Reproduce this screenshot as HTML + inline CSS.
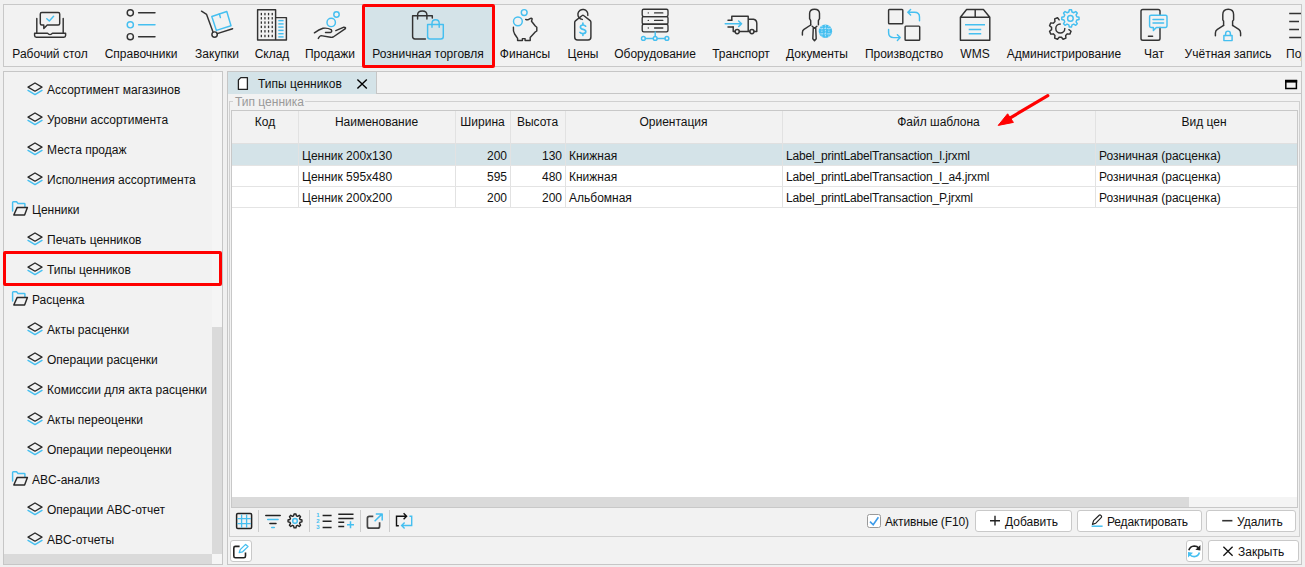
<!DOCTYPE html>
<html><head><meta charset="utf-8">
<style>
*{box-sizing:border-box;margin:0;padding:0}
html,body{width:1305px;height:567px;overflow:hidden;background:#f0f0f0;font-family:"Liberation Sans",sans-serif;font-size:12px;color:#111}
.a{position:absolute}
.t{position:absolute;white-space:nowrap;line-height:14px}
.box{position:absolute;border:1px solid #c6c6c6}
svg{position:absolute;overflow:visible}
.k{fill:none;stroke:#333;stroke-width:1.45;stroke-linecap:round;stroke-linejoin:round}
.b{fill:none;stroke:#45bff0;stroke-width:1.45;stroke-linecap:round;stroke-linejoin:round}
.lbl{position:absolute;top:47px;white-space:nowrap;line-height:14px;transform:translateX(-50%)}
.tr{position:absolute;left:0;width:100%;height:21px;border-bottom:1px solid #e4e4e4}
.c{position:absolute;top:0;height:21px;line-height:21px;white-space:nowrap;padding:0 4px}
.btn{position:absolute;background:#fff;border:1px solid #c9c9c9;border-radius:3px}
</style></head><body>

<!-- TOOLBAR -->
<div class="box" style="left:3px;top:4px;width:1299px;height:63px;background:#f2f2f2;border-color:#c8c8c8"></div>
<div class="a" style="left:362px;top:4px;width:133px;height:64px;border:3px solid #f00;border-radius:2px;background:#d4e3e8"></div>

<div class="lbl" style="left:50px">Рабочий стол</div>
<div class="lbl" style="left:141px">Справочники</div>
<div class="lbl" style="left:217px">Закупки</div>
<div class="lbl" style="left:272px">Склад</div>
<div class="lbl" style="left:330px">Продажи</div>
<div class="lbl" style="left:428px">Розничная торговля</div>
<div class="lbl" style="left:525px">Финансы</div>
<div class="lbl" style="left:583px">Цены</div>
<div class="lbl" style="left:655px">Оборудование</div>
<div class="lbl" style="left:741px">Транспорт</div>
<div class="lbl" style="left:817px">Документы</div>
<div class="lbl" style="left:904px">Производство</div>
<div class="lbl" style="left:975px">WMS</div>
<div class="lbl" style="left:1064px">Администрирование</div>
<div class="lbl" style="left:1154px">Чат</div>
<div class="lbl" style="left:1228px">Учётная запись</div>
<div class="a" style="left:1286px;top:47px;width:15px;overflow:hidden;white-space:nowrap;line-height:14px">Подсистемы</div>
<!--ICONS-->
<svg style="left:0;top:0" width="1305" height="70" viewBox="0 0 1305 70">
<g class="k"><path d="M36.8,18.5V32.8M63.2,18.5V32.8"/><path d="M34.6,33.2H47.5Q48.5,34.6 50,34.6Q51.5,34.6 52.5,33.2H65.6V35.6Q65.6,37.3 63.9,37.3H36.3Q34.6,37.3 34.6,35.6Z"/><path d="M41.8,12.4H58.2Q59.7,12.4 59.7,13.9V23.4Q59.7,24.9 58.2,24.9H47.2L43.8,28.4V24.9H41.8Q40.3,24.9 40.3,23.4V13.9Q40.3,12.4 41.8,12.4Z"/></g>
<path class="b" d="M46.8,18.8L49.3,21L53.6,16.3"/>
<g class="k"><circle cx="130.3" cy="12.8" r="3.1"/><circle cx="130.3" cy="36.7" r="3.1"/><path d="M138.6,12.8H155M138.6,36.7H155"/></g>
<g class="b"><circle cx="130.3" cy="24.8" r="3.1"/><path d="M138.6,24.8H155"/></g>
<g class="k"><path d="M201.5,11.2L206.6,14.4L212.9,31.8"/><circle cx="214.6" cy="34.6" r="2.7"/><path d="M217.2,33.6L232.6,28.8"/></g>
<g class="b"><path d="M211.8,16.5L226.8,11.5L231,25.8L216.4,30.4Z"/><path d="M219.4,14L220.4,17.6"/></g>
<g class="k"><path d="M257.6,40V9.8H275.6V40ZM275.6,17.6H286.4V40H275.6"/></g>
<rect x="260.7" y="12.9" width="1.3" height="2.4" fill="#333"/><rect x="260.7" y="17.1" width="1.3" height="2.4" fill="#333"/><rect x="260.7" y="21.4" width="1.3" height="2.4" fill="#333"/><rect x="260.7" y="25.7" width="1.3" height="2.4" fill="#333"/><rect x="260.7" y="30.1" width="1.3" height="2.4" fill="#333"/><rect x="260.7" y="34.8" width="1.3" height="2.4" fill="#333"/><rect x="264.3" y="12.9" width="1.3" height="2.4" fill="#333"/><rect x="264.3" y="17.1" width="1.3" height="2.4" fill="#333"/><rect x="264.3" y="21.4" width="1.3" height="2.4" fill="#333"/><rect x="264.3" y="25.7" width="1.3" height="2.4" fill="#333"/><rect x="264.3" y="30.1" width="1.3" height="2.4" fill="#333"/><rect x="264.3" y="34.8" width="1.3" height="2.4" fill="#333"/><rect x="267.9" y="12.9" width="1.3" height="2.4" fill="#333"/><rect x="267.9" y="17.1" width="1.3" height="2.4" fill="#333"/><rect x="267.9" y="21.4" width="1.3" height="2.4" fill="#333"/><rect x="267.9" y="25.7" width="1.3" height="2.4" fill="#333"/><rect x="267.9" y="30.1" width="1.3" height="2.4" fill="#333"/><rect x="267.9" y="34.8" width="1.3" height="2.4" fill="#333"/><rect x="271.6" y="12.9" width="1.3" height="2.4" fill="#333"/><rect x="271.6" y="17.1" width="1.3" height="2.4" fill="#333"/><rect x="271.6" y="21.4" width="1.3" height="2.4" fill="#333"/><rect x="271.6" y="25.7" width="1.3" height="2.4" fill="#333"/><rect x="271.6" y="30.1" width="1.3" height="2.4" fill="#333"/><rect x="271.6" y="34.8" width="1.3" height="2.4" fill="#333"/>
<g class="b" style="stroke-linecap:butt"><path d="M278.3,20.6H283.6"/><path d="M278.3,23.9H283.6"/><path d="M278.3,27.1H283.6"/><path d="M278.3,30.4H283.6"/><path d="M278.3,33.7H283.6"/><path d="M278.3,36.9H283.6"/></g>
<g class="b"><circle cx="336.5" cy="14.5" r="2.7"/><circle cx="331.2" cy="22.4" r="4.2"/></g>
<g class="k"><path d="M314.4,32.8Q319,29.5 323,28.3Q327,27.6 331.2,29.6Q332.5,31.8 330.6,32.4H325.5"/><path d="M335.8,30.6L343.9,27.2Q346,27.4 345.4,28.6L333.2,37Q331.5,37.6 330.6,37.3L321,35.6Q319.5,35.8 318.3,38.4"/></g>
<g class="k"><path d="M425.4,38.9H415Q412.6,38.9 412.6,36.5V15.8H432.3V17.9"/><path d="M417.6,19V15Q417.6,11 422.3,11Q426.9,11 426.9,15V19"/></g>
<g class="b"><path d="M427.6,24.5H443.3V36.4Q443.3,38.9 440.8,38.9H430.1Q427.6,38.9 427.6,36.4Z"/><path d="M432,27.2V23.3Q432,19.8 435.6,19.8Q439.2,19.8 439.2,23.3V27.2"/></g>
<g class="b"><circle cx="524.2" cy="12.5" r="2.9"/><circle cx="517.9" cy="21.3" r="4.4"/></g>
<path class="k" d="M513.4,27.2Q513,31 514.6,34Q516.4,36.6 517.6,38.4V40.4H522.4V38.6H525.1V40.4H530.2V37.6L535,32.2L536.8,31V27.2L535.3,26L531.5,21.2L532.2,18.8Q531.5,17.8 530.6,18.3L527.8,19.8Q526.5,19.9 525.7,19.4"/>
<g class="k"><path d="M587.8,15.4A5,5 0 1 0 582.3,19.4"/><path d="M582.2,15.5Q582.9,14.9 583.6,15.5L590.2,20.6Q590.9,21.2 590.9,22.2V37Q590.9,40 588,40H577.6Q574.7,40 574.7,37V22.4Q574.7,21.5 575.4,20.9Z"/></g>
<path class="b" style="stroke-width:1.7" d="M585.6,26.2Q584.8,25 583,25Q580.4,25 580.4,27.1Q580.4,28.8 583,29.4Q585.8,30 585.8,31.6Q585.8,33.6 583,33.6Q580.8,33.6 580,32.4M582.9,23.2V25M582.9,33.6V35.3"/>
<g class="k" style="stroke-width:1.35"><rect x="642.2" y="9.2" width="25.8" height="7.4" rx="1.5"/><rect x="642.2" y="16.6" width="25.8" height="7.6" rx="1.5"/><rect x="642.2" y="24.2" width="25.8" height="7.6" rx="1.5"/><path d="M654.6,12.9H662.8M654.6,20.4H662.8M654.6,28H662.8"/></g>
<g fill="#333"><circle cx="648.3" cy="12.9" r="0.7"/><circle cx="648.3" cy="20.4" r="0.7"/><circle cx="648.3" cy="28" r="0.7"/></g>
<g class="b"><path d="M645.4,38.4H653.2M657.2,38.4H665M655.2,32V36.4"/><circle cx="643.4" cy="38.4" r="1.9"/><circle cx="655.2" cy="38.4" r="1.9"/><circle cx="666.9" cy="38.4" r="1.9"/></g>
<g class="k"><path d="M731.8,20.3V16.3H748.2V31.4H739.4M735,31.4H733.2V27M748.2,19.2H753.5Q756.8,19.8 756.8,23.5V31.4H754.1M749.8,31.4H748.2"/><path d="M728,20.3H731.8M728,27H733.2"/><circle cx="737.2" cy="31.6" r="2.1"/><circle cx="751.9" cy="31.6" r="2.1"/></g>
<g class="b"><path d="M725.2,23.8H741.6M738.6,21L741.6,23.8L738.6,26.6"/></g>
<g class="k"><path d="M810.7,25V20.6L809.6,18.7V13.6Q809.6,9.2 814.5,9.2Q819.5,9.2 819.5,13.6V18.7L818.4,20.6V24.8"/><path d="M810.7,25L804,29.4Q802.4,30.6 802.4,32.4V34.9"/><path d="M812.2,26.2L814.5,28.2L816.9,26.2M813.3,27.8L812.8,38.8L814.5,40.8L816.2,38.8L815.7,27.8"/></g>
<circle cx="825.4" cy="31.2" r="6.7" fill="#45bff0"/>
<g fill="none" stroke="#c8ebfa" stroke-width="0.8" stroke-dasharray="1.6,0.9"><path d="M821.9,25.5V37M825.4,24.8V37.6M828.9,25.5V37M819.2,28.4H831.6M819.2,33.9H831.6"/></g>
<g class="k"><rect x="888.6" y="9.5" width="14.2" height="14.2" rx="0.8"/><rect x="905.1" y="26.1" width="14.6" height="14.1" rx="0.8"/></g>
<g class="b"><path d="M919.5,20.8V17Q919.5,12.2 914.5,12.2H908.2M910.6,9.4L907.8,12.2L910.6,15"/><path d="M888.6,29.4V32.5Q888.6,37.6 893.6,37.6H899.8M897.4,34.8L900.2,37.6L897.4,40.4"/></g>
<g class="k"><path d="M960.4,17.2L966.6,9.5H983.4L989.8,17.2V40.2H960.4ZM960.4,17.2H989.8M975.2,9.5V17.2"/></g>
<g class="b" style="stroke-linecap:butt"><path d="M965,24.8H985M968.7,29.4H981.2M968.7,33.8H981.2"/></g>
<defs><clipPath id="gclip"><path d="M1040,0H1090V40H1040Z M1070.4,18.4m-10.8,0a10.8,10.8 0 1 0 21.6,0a10.8,10.8 0 1 0 -21.6,0Z" clip-rule="evenodd"/></clipPath></defs>
<g class="k" clip-path="url(#gclip)"><path d="M1054.95,21.51 L1054.66,18.94 L1057.53,17.75 L1059.14,19.78 L1061.46,19.78 L1063.07,17.75 L1065.94,18.94 L1065.65,21.51 L1067.29,23.15 L1069.86,22.86 L1071.05,25.73 L1069.02,27.34 L1069.02,29.66 L1071.05,31.27 L1069.86,34.14 L1067.29,33.85 L1065.65,35.49 L1065.94,38.06 L1063.07,39.25 L1061.46,37.22 L1059.14,37.22 L1057.53,39.25 L1054.66,38.06 L1054.95,35.49 L1053.31,33.85 L1050.74,34.14 L1049.55,31.27 L1051.58,29.66 L1051.58,27.34 L1049.55,25.73 L1050.74,22.86 L1053.31,23.15Z"/><path d="M1060.3,24A4.5,4.5 0 1 0 1064.8,28.5"/></g>
<g class="b"><path d="M1068.80,12.00 L1069.32,9.77 L1071.48,9.77 L1072.00,12.00 L1073.80,12.74 L1075.74,11.53 L1077.27,13.06 L1076.06,15.00 L1076.80,16.80 L1079.03,17.32 L1079.03,19.48 L1076.80,20.00 L1076.06,21.80 L1077.27,23.74 L1075.74,25.27 L1073.80,24.06 L1072.00,24.80 L1071.48,27.03 L1069.32,27.03 L1068.80,24.80 L1067.00,24.06 L1065.06,25.27 L1063.53,23.74 L1064.74,21.80 L1064.00,20.00 L1061.77,19.48 L1061.77,17.32 L1064.00,16.80 L1064.74,15.00 L1063.53,13.06 L1065.06,11.53 L1067.00,12.74Z"/><circle cx="1070.4" cy="18.4" r="2.8"/></g>
<g class="k"><path d="M1160,27.5V38.4Q1160,40.2 1158.2,40.2H1142.8Q1141,40.2 1141,38.4V11.2Q1141,9.4 1142.8,9.4H1158.2Q1160,9.4 1160,11.2V15.2"/><path d="M1148.4,36.3H1152.6"/></g>
<g class="b"><path d="M1151,15.2H1165.6Q1167,15.2 1167,16.6V26Q1167,27.4 1165.6,27.4H1156.4L1153.4,30.6V27.4H1151Q1149.6,27.4 1149.6,26V16.6Q1149.6,15.2 1151,15.2Z"/><path d="M1153,19.5H1163.6M1153,23H1163.6"/></g>
<g class="k"><path d="M1223.6,25.4L1217.4,29.4Q1215.4,30.8 1215.4,33V35.8M1232.6,25.4L1238.8,29.4Q1240.6,30.8 1240.6,33V35.8"/><path d="M1223.6,25.4V21.2L1222.8,19.8V14.6Q1222.8,9.3 1228.2,9.3Q1233.6,9.3 1233.6,14.6V19.8L1232.6,21.2V25.4"/></g>
<g class="b"><rect x="1223.9" y="35.4" width="8.2" height="5.2"/><path d="M1225.6,35.4V33.8Q1225.6,31.1 1228,31.1Q1230.4,31.1 1230.4,33.8V35.4"/></g>
<g class="k" style="stroke-linecap:butt"><path d="M1289.2,13.4H1301M1289.2,21.4H1299M1289.2,29.5H1299M1289.2,37.5H1301"/></g>
</svg>
<!--/ICONS-->

<!-- LEFT PANEL -->
<div class="box" style="left:3px;top:71px;width:220px;height:494px;background:#f2f2f2"></div>
<div class="a" style="left:212px;top:72px;width:10px;height:492px;background:#f5f5f5"></div>
<div class="a" style="left:212px;top:327px;width:10px;height:227px;background:#dadada"></div>
<div class="a" style="left:4px;top:554px;width:208px;height:10px;background:#dadada"></div>
<div class="a" style="left:3px;top:251px;width:219px;height:35px;border:3px solid #f00;border-radius:2px"></div>
<!--TREE-->
<div class="t" style="left:47px;top:83px">Ассортимент магазинов</div>
<div class="t" style="left:47px;top:113px">Уровни ассортимента</div>
<div class="t" style="left:47px;top:143px">Места продаж</div>
<div class="t" style="left:47px;top:173px">Исполнения ассортимента</div>
<div class="t" style="left:32px;top:203px">Ценники</div>
<div class="t" style="left:47px;top:233px">Печать ценников</div>
<div class="t" style="left:47px;top:263px">Типы ценников</div>
<div class="t" style="left:32px;top:293px">Расценка</div>
<div class="t" style="left:47px;top:323px">Акты расценки</div>
<div class="t" style="left:47px;top:353px">Операции расценки</div>
<div class="t" style="left:47px;top:383px">Комиссии для акта расценки</div>
<div class="t" style="left:47px;top:413px">Акты переоценки</div>
<div class="t" style="left:47px;top:443px">Операции переоценки</div>
<div class="t" style="left:32px;top:473px">ABC-анализ</div>
<div class="t" style="left:47px;top:503px">Операции ABC-отчет</div>
<div class="t" style="left:47px;top:533px">ABC-отчеты</div>
<svg style="left:0;top:0" width="222" height="567" viewBox="0 0 222 567"><g transform="translate(0,0)"><path class="k" style="stroke:#2a2a2a;stroke-width:1.3" d="M28,87.1L35,83L42,87.1L35,91.2Z"/><path class="b" style="stroke-width:1.4" d="M28,90.4L35,94.6L42,90.4"/></g><g transform="translate(0,30)"><path class="k" style="stroke:#2a2a2a;stroke-width:1.3" d="M28,87.1L35,83L42,87.1L35,91.2Z"/><path class="b" style="stroke-width:1.4" d="M28,90.4L35,94.6L42,90.4"/></g><g transform="translate(0,60)"><path class="k" style="stroke:#2a2a2a;stroke-width:1.3" d="M28,87.1L35,83L42,87.1L35,91.2Z"/><path class="b" style="stroke-width:1.4" d="M28,90.4L35,94.6L42,90.4"/></g><g transform="translate(0,90)"><path class="k" style="stroke:#2a2a2a;stroke-width:1.3" d="M28,87.1L35,83L42,87.1L35,91.2Z"/><path class="b" style="stroke-width:1.4" d="M28,90.4L35,94.6L42,90.4"/></g><g transform="translate(0,0)"><path class="b" d="M12.6,211V202.6Q12.6,201.8 13.4,201.8H16.6L18,203.4H24.2Q24.9,203.4 24.9,204.1V206.4"/><path class="k" style="stroke:#2a2a2a" d="M17.2,207.4H27.4L24.6,215H13.8Z"/></g><g transform="translate(0,150)"><path class="k" style="stroke:#2a2a2a;stroke-width:1.3" d="M28,87.1L35,83L42,87.1L35,91.2Z"/><path class="b" style="stroke-width:1.4" d="M28,90.4L35,94.6L42,90.4"/></g><g transform="translate(0,180)"><path class="k" style="stroke:#2a2a2a;stroke-width:1.3" d="M28,87.1L35,83L42,87.1L35,91.2Z"/><path class="b" style="stroke-width:1.4" d="M28,90.4L35,94.6L42,90.4"/></g><g transform="translate(0,90)"><path class="b" d="M12.6,211V202.6Q12.6,201.8 13.4,201.8H16.6L18,203.4H24.2Q24.9,203.4 24.9,204.1V206.4"/><path class="k" style="stroke:#2a2a2a" d="M17.2,207.4H27.4L24.6,215H13.8Z"/></g><g transform="translate(0,240)"><path class="k" style="stroke:#2a2a2a;stroke-width:1.3" d="M28,87.1L35,83L42,87.1L35,91.2Z"/><path class="b" style="stroke-width:1.4" d="M28,90.4L35,94.6L42,90.4"/></g><g transform="translate(0,270)"><path class="k" style="stroke:#2a2a2a;stroke-width:1.3" d="M28,87.1L35,83L42,87.1L35,91.2Z"/><path class="b" style="stroke-width:1.4" d="M28,90.4L35,94.6L42,90.4"/></g><g transform="translate(0,300)"><path class="k" style="stroke:#2a2a2a;stroke-width:1.3" d="M28,87.1L35,83L42,87.1L35,91.2Z"/><path class="b" style="stroke-width:1.4" d="M28,90.4L35,94.6L42,90.4"/></g><g transform="translate(0,330)"><path class="k" style="stroke:#2a2a2a;stroke-width:1.3" d="M28,87.1L35,83L42,87.1L35,91.2Z"/><path class="b" style="stroke-width:1.4" d="M28,90.4L35,94.6L42,90.4"/></g><g transform="translate(0,360)"><path class="k" style="stroke:#2a2a2a;stroke-width:1.3" d="M28,87.1L35,83L42,87.1L35,91.2Z"/><path class="b" style="stroke-width:1.4" d="M28,90.4L35,94.6L42,90.4"/></g><g transform="translate(0,270)"><path class="b" d="M12.6,211V202.6Q12.6,201.8 13.4,201.8H16.6L18,203.4H24.2Q24.9,203.4 24.9,204.1V206.4"/><path class="k" style="stroke:#2a2a2a" d="M17.2,207.4H27.4L24.6,215H13.8Z"/></g><g transform="translate(0,420)"><path class="k" style="stroke:#2a2a2a;stroke-width:1.3" d="M28,87.1L35,83L42,87.1L35,91.2Z"/><path class="b" style="stroke-width:1.4" d="M28,90.4L35,94.6L42,90.4"/></g><g transform="translate(0,450)"><path class="k" style="stroke:#2a2a2a;stroke-width:1.3" d="M28,87.1L35,83L42,87.1L35,91.2Z"/><path class="b" style="stroke-width:1.4" d="M28,90.4L35,94.6L42,90.4"/></g></svg>
<!--/TREE-->

<!-- RIGHT PANEL -->
<div class="box" style="left:227px;top:71px;width:75px;height:494px;width:1075px;background:#f2f2f2"></div>
<div class="a" style="left:228px;top:72px;width:149px;height:22px;background:#d4e3e8;border-right:1px solid #c6c6c6"></div>
<div class="a" style="left:376px;top:93px;width:925px;height:1px;background:#c6c6c6"></div>
<div class="t" style="left:258px;top:77px">Типы ценников</div>
<!--TAB-->

<div class="box" style="left:229px;top:101px;width:1071px;height:436px;border-color:#d0d0d0"></div>
<div class="t" style="left:233px;top:95px;padding:0 1px 0 2px;background:#f2f2f2;color:#9a9a9a">Тип ценника</div>

<div class="box" style="left:231px;top:110px;width:1067px;height:398px;background:#fff;border-color:#c8c8c8"></div>
<div class="a" style="left:232px;top:111px;width:1065px;height:33px;background:#f2f2f2;border-bottom:1px solid #e0e0e0"></div>
<!--TABLE-->
<div class="a" style="left:232px;top:144px;width:1065px;height:21px;background:#d4e3e8"></div>
<div class="a" style="left:298px;top:111px;width:1px;height:96px;background:#e2e2e2"></div>
<div class="a" style="left:455px;top:111px;width:1px;height:96px;background:#e2e2e2"></div>
<div class="a" style="left:510px;top:111px;width:1px;height:96px;background:#e2e2e2"></div>
<div class="a" style="left:565px;top:111px;width:1px;height:96px;background:#e2e2e2"></div>
<div class="a" style="left:782px;top:111px;width:1px;height:96px;background:#e2e2e2"></div>
<div class="a" style="left:1095px;top:111px;width:1px;height:96px;background:#e2e2e2"></div>
<div class="t" style="left:232px;width:66px;top:115px;text-align:center">Код</div>
<div class="t" style="left:298px;width:157px;top:115px;text-align:center">Наименование</div>
<div class="t" style="left:455px;width:55px;top:115px;text-align:center">Ширина</div>
<div class="t" style="left:510px;width:55px;top:115px;text-align:center">Высота</div>
<div class="t" style="left:565px;width:217px;top:115px;text-align:center">Ориентация</div>
<div class="t" style="left:782px;width:313px;top:115px;text-align:center">Файл шаблона</div>
<div class="t" style="left:1095px;width:218px;top:115px;text-align:center">Вид цен</div>
<div class="a" style="left:232px;top:165px;width:1065px;height:1px;background:#e4e4e4"></div>
<div class="t" style="left:302px;top:149px">Ценник 200x130</div>
<div class="t" style="left:455px;width:52px;top:149px;text-align:right">200</div>
<div class="t" style="left:510px;width:52px;top:149px;text-align:right">130</div>
<div class="t" style="left:569px;top:149px">Книжная</div>
<div class="t" style="left:786px;top:149px;letter-spacing:-0.17px">Label_printLabelTransaction_I.jrxml</div>
<div class="t" style="left:1099px;top:149px">Розничная (расценка)</div>
<div class="a" style="left:232px;top:186px;width:1065px;height:1px;background:#e4e4e4"></div>
<div class="t" style="left:302px;top:170px">Ценник 595x480</div>
<div class="t" style="left:455px;width:52px;top:170px;text-align:right">595</div>
<div class="t" style="left:510px;width:52px;top:170px;text-align:right">480</div>
<div class="t" style="left:569px;top:170px">Книжная</div>
<div class="t" style="left:786px;top:170px;letter-spacing:-0.17px">Label_printLabelTransaction_I_a4.jrxml</div>
<div class="t" style="left:1099px;top:170px">Розничная (расценка)</div>
<div class="a" style="left:232px;top:207px;width:1065px;height:1px;background:#e4e4e4"></div>
<div class="t" style="left:302px;top:191px">Ценник 200x200</div>
<div class="t" style="left:455px;width:52px;top:191px;text-align:right">200</div>
<div class="t" style="left:510px;width:52px;top:191px;text-align:right">200</div>
<div class="t" style="left:569px;top:191px">Альбомная</div>
<div class="t" style="left:786px;top:191px;letter-spacing:-0.17px">Label_printLabelTransaction_P.jrxml</div>
<div class="t" style="left:1099px;top:191px">Розничная (расценка)</div>
<!--/TABLE-->
<div class="a" style="left:232px;top:497px;width:1065px;height:10px;background:#f4f4f4"></div>
<div class="a" style="left:232px;top:497px;width:957px;height:10px;background:#dadada"></div>
<!--BOTTOM-->
<div class="btn" style="left:230px;top:540px;width:22px;height:22px"></div>
<div class="btn" style="left:1186px;top:540px;width:17px;height:22px"></div>
<div class="btn" style="left:1208px;top:540px;width:91px;height:22px"></div>
<div class="btn" style="left:1206px;top:510px;width:90px;height:22px"></div>
<div class="btn" style="left:1077px;top:510px;width:125px;height:22px"></div>
<div class="btn" style="left:975px;top:510px;width:97px;height:22px"></div>
<svg style="left:0;top:0" width="1305" height="567" viewBox="0 0 1305 567">
<path d="M240.8,77.6H247.4V89.4H238.4V80Z" fill="#fff" stroke="#222" stroke-width="1.3" stroke-linejoin="round"/>
<path d="M357.4,79.4L366.8,88.4M366.8,79.4L357.4,88.4" stroke="#000" stroke-width="1.4" fill="none"/>
<rect x="1285.8" y="80.5" width="10.6" height="8" fill="none" stroke="#000" stroke-width="1.5"/><rect x="1285" y="80" width="12.2" height="2.6" fill="#000"/>
<path d="M1047.8,95.6L1006,120.4" stroke="#f00" stroke-width="3.2" stroke-linecap="round" fill="none"/><path d="M998.2,125.4L1007.6,113.8L1013.4,122.4Z" fill="#f00" stroke="#f00" stroke-width="1" stroke-linejoin="round"/>
<g class="k" style="stroke:#222;stroke-width:1.5"><rect x="236.6" y="513.6" width="15" height="14.9" rx="1.2"/></g>
<g class="b" style="stroke-width:1.3;stroke-linecap:butt"><path d="M241.6,514.4V527.8M246.6,514.4V527.8M237.4,518.6H250.8M237.4,523.6H250.8"/></g>
<g fill="#cdcdcd"><rect x="258" y="510" width="1" height="22"/><rect x="309" y="510" width="1" height="22"/><rect x="360" y="510" width="1" height="22"/><rect x="389" y="510" width="1" height="22"/></g>
<g style="stroke-width:1.5;stroke-linecap:round;fill:none"><path stroke="#222" d="M265.8,515.4H280.2M269.9,523.6H276"/><path stroke="#45bff0" d="M267.7,519.4H278.1M271.7,527.6H274.3"/></g>
<path class="k" style="stroke:#222;stroke-width:1.4" d="M293.64,515.88 L294.06,513.96 L295.94,513.96 L296.36,515.88 L297.59,516.39 L299.24,515.33 L300.57,516.66 L299.51,518.31 L300.02,519.54 L301.94,519.96 L301.94,521.84 L300.02,522.26 L299.51,523.49 L300.57,525.14 L299.24,526.47 L297.59,525.41 L296.36,525.92 L295.94,527.84 L294.06,527.84 L293.64,525.92 L292.41,525.41 L290.76,526.47 L289.43,525.14 L290.49,523.49 L289.98,522.26 L288.06,521.84 L288.06,519.96 L289.98,519.54 L290.49,518.31 L289.43,516.66 L290.76,515.33 L292.41,516.39Z"/><circle class="b" style="stroke-width:1.5" cx="295" cy="520.9" r="2.3"/>
<g fill="#45bff0" style="font-size:6px;font-weight:bold;font-family:Liberation Sans"><text x="316.2" y="517.2">1</text><text x="316.2" y="523.2">2</text><text x="316.2" y="529.4">3</text></g>
<g style="stroke:#222;stroke-width:1.5;fill:none"><path d="M322.6,515.4H331.6M322.6,521.3H331.6M322.6,527.4H331.6M338.3,514.3H353.5M338.3,518.5H353.5M338.3,522.3H344.2M338.3,526.4H344.2"/></g>
<g class="b" style="stroke-width:1.5;stroke-linecap:butt"><path d="M347,524.7H354M350.5,521.2V528.2"/></g>
<path d="M373.3,516.4H369.4Q367.4,516.4 367.4,518.4V526.2Q367.4,528.2 369.4,528.2H377.6Q379.6,528.2 379.6,526.2V522.3" fill="none" stroke="#444" stroke-width="1.7"/>
<g class="b" style="stroke-width:1.5;stroke-linecap:butt"><path d="M374.6,521.3L381.6,514.4M375.8,514H382.2V520.4"/></g>
<g style="stroke:#111;stroke-width:1.4;fill:none"><path d="M398.8,525.7H396.5V516.2H406.6M403.6,513.2L406.6,516.2L403.6,519.2"/></g>
<g class="b" style="stroke-width:1.4;stroke-linecap:butt;stroke-linejoin:miter"><path d="M409.4,516.2H411.7V525.5H401.6M404.6,522.5L401.6,525.5L404.6,528.5"/></g>
<rect x="867.5" y="514.5" width="13" height="13" rx="2" fill="#fff" stroke="#9a9a9a"/><path d="M870,521.6L873.2,524.8L878.4,517.2" fill="none" stroke="#3d9be9" stroke-width="1.6"/>
<path d="M995,515.8V525.6M990,520.7H1000" stroke="#222" stroke-width="1.4" fill="none"/>
<path d="M1092.4,524.4L1093.6,520.6L1099.2,515.2Q1100,514.6 1100.8,515.4L1101.4,516Q1102,516.8 1101.2,517.6L1095.8,523.2Z" fill="none" stroke="#222" stroke-width="1.2" stroke-linejoin="round"/><path d="M1091.6,526.2H1102.6" stroke="#45bff0" stroke-width="1.5"/>
<path d="M1222.2,520.7H1232.4" stroke="#333" stroke-width="1.6"/>
<path d="M1223.4,546.8L1232.6,555.8M1232.6,546.8L1223.4,555.8" stroke="#111" stroke-width="1.3"/>
<path d="M1188.8,550.2Q1190.2,546.2 1194.2,546Q1197.2,546 1198.6,548" fill="none" stroke="#222" stroke-width="1.6"/><path d="M1200.4,545L1200.4,550.6L1195.4,549.8Z" fill="#222"/>
<path d="M1199.4,552.6Q1198.2,556.6 1194.2,556.6Q1191.2,556.6 1189.8,554.6" fill="none" stroke="#45bff0" stroke-width="1.6"/><path d="M1188,557.6L1188,552L1193,552.8Z" fill="#45bff0"/>
<path d="M239.6,546.4H235.4Q233.8,546.4 233.8,548V556Q233.8,557.7 235.4,557.7H243.9Q245.5,557.7 245.5,556V552.4" fill="none" stroke="#222" stroke-width="1.6"/>
<path d="M239.2,552.6L240.2,549.6L245.6,544.4L248,546.6L242.6,551.8Z" fill="none" stroke="#45bff0" stroke-width="1.3" stroke-linejoin="round"/>
</svg>
<div class="t" style="left:885px;top:515px;letter-spacing:-0.15px">Активные (F10)</div>
<div class="t" style="left:1005px;top:515px">Добавить</div>
<div class="t" style="left:1107px;top:515px;letter-spacing:-0.15px">Редактировать</div>
<div class="t" style="left:1237px;top:515px">Удалить</div>
<div class="t" style="left:1238px;top:545px">Закрыть</div>
<!--/BOTTOM-->

</body></html>
